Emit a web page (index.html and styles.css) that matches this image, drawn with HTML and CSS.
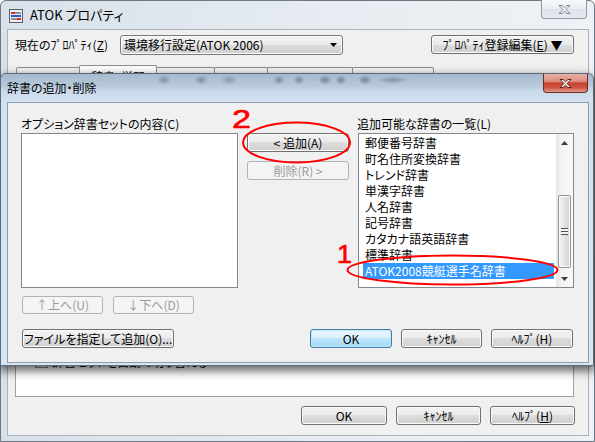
FILE: index.html
```html
<!DOCTYPE html>
<html lang="ja">

<head>
  <meta charset="UTF-8">
  <title>ATOK プロパティ</title>
  <link rel="stylesheet" href="styles.css">
</head>

<body>
  <!-- background window -->
  <div class="atok">
    <div class="atok-title">
      <svg class="app-icon" viewBox="0 0 14 14">
        <rect x="0.5" y="0.5" width="13" height="13" fill="#eceff2" stroke="#5a6068"/>
        <rect x="2" y="3" width="4" height="2" fill="#d8282a"/>
        <rect x="6" y="3.5" width="6" height="1" fill="#333"/>
        <rect x="2" y="6" width="10" height="2" fill="#2a5fc4"/>
        <rect x="2" y="9.5" width="6" height="1" fill="#333"/>
        <rect x="8" y="9" width="4" height="2" fill="#d8282a"/>
      </svg>
      <span class="title-text">ATOK プロパティ</span>
      <div class="caption-close back-close">
        <svg viewBox="0 0 13 9" width="13" height="9">
          <path d="M1 0.5h3l2.5 2.3 2.5-2.3h3l-4 4 4 4h-3l-2.5-2.3-2.5 2.3h-3l4-4z" fill="#f4f6f8" stroke="#7d8792" stroke-width="1"/>
        </svg>
      </div>
    </div>

    <div class="atok-client">
      <div class="prop-row">
        <label class="prop-label">現在のﾌﾟﾛﾊﾟﾃｨ(<u>Z</u>)</label>
        <div class="combo">
          <span>環境移行設定(ATOK 2006)</span>
          <svg class="combo-arrow" viewBox="0 0 7 4" width="7" height="4"><path d="M0 0h7L3.5 4z" fill="#000"/></svg>
        </div>
        <button class="btn prop-edit">ﾌﾟﾛﾊﾟﾃｨ登録編集(<u>E</u>) ▼</button>
      </div>

      <div class="tabs">
        <div class="tab w1"></div>
        <div class="tab active">辞書・学習</div>
        <div class="tab w3"></div>
        <div class="tab w4"></div>
        <div class="tab w5"></div>
        <div class="tab w6"></div>
      </div>

      <div class="tab-page">
        <div class="panel">
          <div class="check-row">
            <span class="check"></span>
            <span>辞書セットを自動で切り替える</span>
          </div>
        </div>
      </div>

      <div class="atok-buttons">
        <button class="btn w86">OK</button>
        <button class="btn w85">ｷｬﾝｾﾙ</button>
        <button class="btn w85">ﾍﾙﾌﾟ(<u>H</u>)</button>
      </div>
    </div>
  </div>

  <!-- dialog on top -->
  <div class="dlg">
    <div class="dlg-title">
      <span class="dlg-title-text">辞書の追加・削除</span>
      <div class="caption-close dlg-close">
        <svg viewBox="0 0 13 9" width="13" height="9">
          <path d="M1 0.5h3l2.5 2.3 2.5-2.3h3l-4 4 4 4h-3l-2.5-2.3-2.5 2.3h-3l4-4z" fill="#fff" stroke="#5a1f18" stroke-width="1"/>
        </svg>
      </div>
    </div>

    <div class="dlg-client">
      <div class="dlg-grid">
        <div class="col-label">オプション辞書セットの内容(C)</div>
        <div></div>
        <div class="col-label right-label">追加可能な辞書の一覧(L)</div>

        <div class="set-list"></div>

        <div class="mid">
          <button class="btn">&lt; 追加(A)</button>
          <button class="btn" disabled>削除(R) &gt;</button>
        </div>

        <div class="dict-list">
          <div class="dict-items">
            <div class="dict-item">郵便番号辞書</div>
            <div class="dict-item">町名住所変換辞書</div>
            <div class="dict-item">トレンド辞書</div>
            <div class="dict-item">単漢字辞書</div>
            <div class="dict-item">人名辞書</div>
            <div class="dict-item">記号辞書</div>
            <div class="dict-item">カタカナ語英語辞書</div>
            <div class="dict-item">標準辞書</div>
            <div class="dict-item sel">ATOK2008競艇選手名辞書</div>
          </div>
          <div class="vscroll">
            <div class="sb-arrow">
              <svg viewBox="0 0 7 4" width="7" height="4"><path d="M3.5 0L7 4H0z" fill="#3c3c3c"/></svg>
            </div>
            <div class="sb-track">
              <div class="sb-thumb">
                <span class="grip"></span>
              </div>
            </div>
            <div class="sb-arrow">
              <svg viewBox="0 0 7 4" width="7" height="4"><path d="M0 0h7L3.5 4z" fill="#3c3c3c"/></svg>
            </div>
          </div>
        </div>
      </div>

      <div class="move-row">
        <button class="btn w81" disabled>↑上へ(U)</button>
        <button class="btn w81" disabled>↓下へ(D)</button>
      </div>

      <div class="foot-row">
        <button class="btn file-btn">ファイルを指定して追加(O)...</button>
        <div class="foot-group">
          <button class="btn btn-default w82">OK</button>
          <button class="btn w81">ｷｬﾝｾﾙ</button>
          <button class="btn w82">ﾍﾙﾌﾟ(H)</button>
        </div>
      </div>
    </div>
  </div>

  <!-- red annotations -->
  <svg class="marks" viewBox="0 0 595 442" width="595" height="442">
    <ellipse cx="296.5" cy="142.5" rx="53.5" ry="20" fill="none" stroke="#f00" stroke-width="2"/>
    <ellipse cx="452.5" cy="270" rx="105" ry="14.5" fill="none" stroke="#f00" stroke-width="2"/>
    <text x="232" y="128" class="mark-num" textLength="19" lengthAdjust="spacingAndGlyphs">2</text>
    <text x="337" y="263" class="mark-num" textLength="15" lengthAdjust="spacingAndGlyphs">1</text>
  </svg>
</body>

</html>
```

FILE: styles.css
```css
body {
  margin: 0;
  width: 595px;
  height: 442px;
  position: relative;
  overflow: hidden;
  background: #fff;
  color: #000;
  font-family: 'Noto Sans CJK JP', 'Noto Sans', sans-serif;
  font-size: 12px;
  font-feature-settings: "palt";
}

/* ---------- background window ---------- */

.atok {
  box-sizing: border-box;
  width: 595px;
  height: 442px;
  border: 1px solid #6f7882;
  border-radius: 6px 6px 0 0;
  background: linear-gradient(to right, #d8e1ea, #e6ecf1 55%, #eef2f6);
  display: flex;
  flex-direction: column;
}

.atok-title {
  height: 28px;
  display: flex;
  align-items: center;
  padding-left: 8px;
}

.app-icon {
  width: 14px;
  height: 14px;
  margin-top: 2px;
}

.title-text {
  margin-left: 7px;
  font-size: 13px;
  line-height: 16px;
}

.caption-close {
  box-sizing: border-box;
  display: flex;
  align-items: center;
  justify-content: center;
  border-radius: 0 0 4px 4px;
  align-self: flex-start;
  margin-left: auto;
}

.back-close {
  width: 46px;
  height: 19px;
  margin-top: -1px;
  margin-right: 7px;
  border: 1px solid #8e99a5;
  border-top: none;
  background: linear-gradient(#f7f9fb, #e9edf1 50%, #dde3e9 51%, #e6ebf0);
}

.atok-client {
  flex: 1;
  margin: 0 5px 5px 6px;
  border: 1px solid #a9b3bd;
  background: #f0f0f0;
  display: flex;
  flex-direction: column;
}

.prop-row {
  display: flex;
  align-items: center;
  padding: 5px 14px 0 7px;
  height: 20px;
}

.prop-label {
  width: 105px;
  line-height: 14px;
  white-space: nowrap;
}

.combo {
  box-sizing: border-box;
  width: 223px;
  height: 20px;
  border: 1px solid #7a7a7a;
  border-radius: 3px;
  background: linear-gradient(#f2f2f2, #ebebeb 50%, #dddddd 50%, #cfcfcf);
  box-shadow: inset 0 0 0 1px #fbfbfb;
  display: flex;
  align-items: center;
  padding: 0 5px 0 3px;
  line-height: 14px;
}

.combo-arrow {
  margin-left: auto;
}

.prop-edit {
  margin-left: auto;
  align-self: flex-start;
  width: 143px;
  height: 19px;
}

.tabs {
  display: flex;
  align-items: flex-end;
  height: 23px;
  margin-top: 10px;
  padding-left: 9px;
}

.tab {
  box-sizing: border-box;
  height: 21px;
  border: 1px solid #898c95;
  border-bottom: none;
  border-radius: 2px 2px 0 0;
  margin-left: -1px;
  background: linear-gradient(#f3f3f3, #e4e4e4);
  text-align: center;
  line-height: 16px;
}

.tab.w1 { width: 64px; }
.tab.w3 { width: 59px; }
.tab.w4 { width: 54px; }
.tab.w5 { width: 86px; }
.tab.w6 { width: 82px; }

.tab.active {
  width: 78px;
  height: 23px;
  padding-top: 3px;
  background: #fcfcfc;
}

.tab-page {
  flex: 1;
  display: flex;
  flex-direction: column;
}

.panel {
  flex: 1;
  margin: 8px 14px 0 7px;
  background: #fff;
  border: 1px solid #a0a0a0;
  display: flex;
  flex-direction: column;
  justify-content: flex-end;
  padding: 0 0 28px 19px;
}

.check-row {
  display: flex;
  align-items: center;
  gap: 4px;
  height: 13px;
  line-height: 13px;
}

.check {
  box-sizing: border-box;
  width: 13px;
  height: 13px;
  border: 1px solid #8f8f8f;
  background: linear-gradient(135deg, #dcdcdc, #fbfbfb);
}

.atok-buttons {
  display: flex;
  justify-content: flex-end;
  gap: 9px;
  padding: 9px 13px 10px 0;
}

.atok-buttons .btn {
  height: 19px;
}

/* ---------- buttons ---------- */

.btn {
  box-sizing: border-box;
  height: 19px;
  padding: 0;
  border: 1px solid #707070;
  border-radius: 3px;
  background: linear-gradient(#f2f2f2, #ebebeb 50%, #dddddd 50%, #cfcfcf);
  box-shadow: inset 0 0 0 1px #fbfbfb;
  font-family: inherit;
  font-size: 12px;
  font-feature-settings: "palt";
  line-height: 14px;
  color: #000;
  white-space: nowrap;
}

.btn:disabled {
  border-color: #adb2b5;
  background: #f4f4f4;
  box-shadow: none;
  color: #9a9a9a;
}

.btn-default {
  border-color: #3c7fb1;
  background: linear-gradient(#eaf6fd, #d9f0fc 50%, #bee6fd 50%, #a7d9f5);
  box-shadow: inset 0 0 0 1px #c4e5f6;
}

.w81 { width: 81px; }
.w82 { width: 82px; }
.w85 { width: 85px; }
.w86 { width: 86px; }

/* ---------- dialog ---------- */

.dlg {
  position: absolute;
  z-index: 2;
  left: 0;
  top: 73px;
  box-sizing: border-box;
  width: 594px;
  height: 293px;
  border: 1px solid #5c6b7b;
  border-radius: 6px 6px 0 0;
  box-shadow: 0 4px 10px 1px rgba(0, 0, 0, 0.6);
  display: flex;
  flex-direction: column;
  background:
    radial-gradient(ellipse 7px 5px at 163px 6px, rgba(60, 82, 112, 0.45), transparent),
    radial-gradient(ellipse 7px 5px at 200px 6px, rgba(60, 82, 112, 0.45), transparent),
    radial-gradient(ellipse 9px 5px at 228px 6px, rgba(60, 82, 112, 0.35), transparent),
    radial-gradient(ellipse 6px 5px at 278px 6px, rgba(60, 82, 112, 0.5), transparent),
    radial-gradient(ellipse 6px 5px at 298px 6px, rgba(60, 82, 112, 0.5), transparent),
    radial-gradient(ellipse 7px 5px at 324px 6px, rgba(60, 82, 112, 0.55), transparent),
    radial-gradient(ellipse 6px 5px at 340px 6px, rgba(60, 82, 112, 0.55), transparent),
    radial-gradient(ellipse 7px 5px at 364px 6px, rgba(60, 82, 112, 0.55), transparent),
    radial-gradient(ellipse 16px 4px at 392px 6px, rgba(60, 82, 112, 0.4), transparent),
    linear-gradient(#a7bacd 0, #b7c9db 12px, #c9daea 17px, #d3e2f1 28px, #d8e6f3 100%);
}

.dlg-title {
  height: 28px;
  display: flex;
  align-items: center;
  padding-left: 6px;
}

.dlg-title-text {
  line-height: 16px;
}

.dlg-close {
  width: 45px;
  height: 19px;
  margin-right: 5px;
  border: 1px solid #6b2a22;
  border-top: none;
  background: linear-gradient(#e9b1a6, #dc8f80 40%, #c7412f 52%, #cf5443 75%, #e29a8c);
}

.dlg-client {
  flex: 1;
  margin: 0 4px 2px 6px;
  border: 1px solid #8d9cab;
  background: #f0f0f0;
  display: flex;
  flex-direction: column;
  padding: 14px 14px 14px 13px;
}

.dlg-grid {
  display: grid;
  grid-template-columns: 217px 102px 216px;
  grid-template-rows: 16px 155px;
  column-gap: 9px;
}

.col-label {
  line-height: 14px;
  white-space: nowrap;
}

.right-label {
  margin-left: -1px;
}

.set-list {
  border: 1px solid #828790;
  background: #fff;
}

.mid {
  display: flex;
  flex-direction: column;
  gap: 9px;
}

.dict-list {
  display: flex;
  border: 1px solid #828790;
  background: #fff;
}

.dict-items {
  flex: 1;
  padding: 1px 2px 0 4px;
}

.dict-item {
  height: 16px;
  line-height: 16px;
  padding-left: 2px;
  white-space: nowrap;
}

.dict-item.sel {
  background: #3399ff;
  color: #fff;
}

.vscroll {
  width: 17px;
  display: flex;
  flex-direction: column;
  background: linear-gradient(to right, #e6e6e6, #f3f3f3 30%, #f8f8f8);
}

.sb-arrow {
  height: 17px;
  display: flex;
  align-items: center;
  justify-content: center;
}

.sb-track {
  flex: 1;
}

.sb-thumb {
  box-sizing: border-box;
  height: 73px;
  margin: 44px 2px 0;
  border: 1px solid #959595;
  border-radius: 2px;
  background: linear-gradient(to right, #f4f4f4, #e4e4e4 50%, #d2d2d2);
  box-shadow: inset 0 0 0 1px #fafafa;
  display: flex;
  align-items: center;
  justify-content: center;
}

.grip {
  width: 7px;
  height: 7px;
  background: repeating-linear-gradient(#505050 0 1px, #f4f4f4 1px 3px);
}

.move-row {
  display: flex;
  gap: 10px;
  margin-top: 8px;
  padding-left: 1px;
}

.move-row .btn {
  height: 18px;
}

.foot-row {
  display: flex;
  margin-top: 15px;
  padding-left: 1px;
}

.file-btn {
  width: 152px;
}

.foot-group {
  display: flex;
  gap: 9px;
  margin-left: auto;
  margin-right: 1px;
}

/* ---------- annotations ---------- */

.marks {
  position: absolute;
  z-index: 3;
  left: 0;
  top: 0;
  pointer-events: none;
}

.mark-num {
  font-family: 'Liberation Sans', Arial, sans-serif;
  font-size: 25px;
  fill: #f00;
  stroke: #f00;
  stroke-width: 0.6;
}
```
